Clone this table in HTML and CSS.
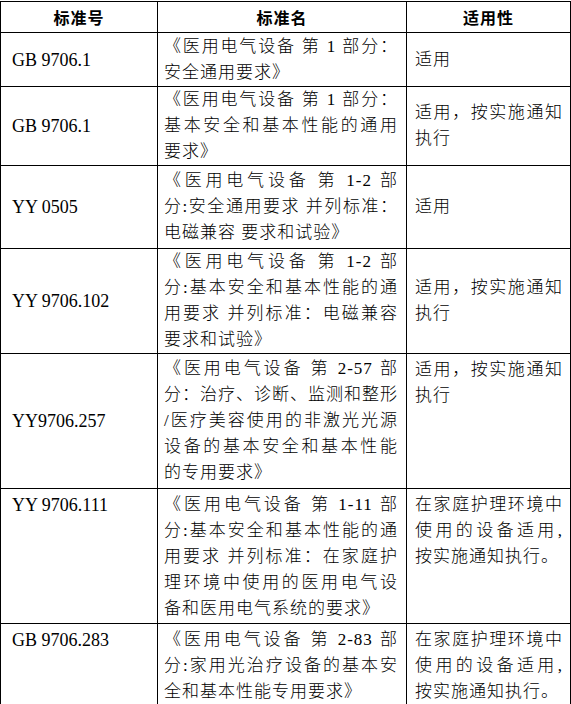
FILE: index.html
```html
<!DOCTYPE html>
<html lang="zh-CN">
<head>
<meta charset="utf-8">
<title>标准表</title>
<link rel="stylesheet" href="styles.css">
</head>
<body>
<table class="std">
  <colgroup>
    <col class="c1">
    <col class="c2">
    <col class="c3">
  </colgroup>
  <thead>
    <tr class="hd">
      <th>标准号</th>
      <th>标准名</th>
      <th>适用性</th>
    </tr>
  </thead>
  <tbody>
    <tr class="r1">
      <td class="code">GB 9706.1</td>
      <td class="name"><span class="ln">《医用电气设备 第 1 部分：</span><span class="ll">安全通用要求》</span></td>
      <td class="use"><span class="ll">适用</span></td>
    </tr>
    <tr class="r2">
      <td class="code">GB 9706.1</td>
      <td class="name"><span class="ln">《医用电气设备 第 1 部分：</span><span class="ln">基本安全和基本性能的通用</span><span class="ll">要求》</span></td>
      <td class="use"><span class="ln">适用，按实施通知</span><span class="ll">执行</span></td>
    </tr>
    <tr class="r3">
      <td class="code">YY 0505</td>
      <td class="name"><span class="ln">《医用电气设备 第 1-2 部</span><span class="ln">分:安全通用要求 并列标准：</span><span class="ll">电磁兼容 要求和试验》</span></td>
      <td class="use"><span class="ll">适用</span></td>
    </tr>
    <tr class="r4">
      <td class="code">YY 9706.102</td>
      <td class="name"><span class="ln">《医用电气设备 第 1-2 部</span><span class="ln">分:基本安全和基本性能的通</span><span class="ln">用要求 并列标准：电磁兼容</span><span class="ll">要求和试验》</span></td>
      <td class="use"><span class="ln">适用，按实施通知</span><span class="ll">执行</span></td>
    </tr>
    <tr class="r5">
      <td class="code">YY9706.257</td>
      <td class="name"><span class="ln">《医用电气设备 第 2-57 部</span><span class="ln">分：治疗、诊断、监测和整形</span><span class="ln">/医疗美容使用的非激光光源</span><span class="ln">设备的基本安全和基本性能</span><span class="ll">的专用要求》</span></td>
      <td class="use top"><span class="ln">适用，按实施通知</span><span class="ll">执行</span></td>
    </tr>
    <tr class="r6">
      <td class="code top">YY 9706.111</td>
      <td class="name top"><span class="ln">《医用电气设备 第 1-11 部</span><span class="ln">分:基本安全和基本性能的通</span><span class="ln">用要求 并列标准：在家庭护</span><span class="ln">理环境中使用的医用电气设</span><span class="ll">备和医用电气系统的要求》</span></td>
      <td class="use top"><span class="ln">在家庭护理环境中</span><span class="ln">使用的设备适用,</span><span class="ll">按实施通知执行。</span></td>
    </tr>
    <tr class="r7">
      <td class="code top">GB 9706.283</td>
      <td class="name top"><span class="ln">《医用电气设备 第 2-83 部</span><span class="ln">分:家用光治疗设备的基本安</span><span class="ll">全和基本性能专用要求》</span></td>
      <td class="use top"><span class="ln">在家庭护理环境中</span><span class="ln">使用的设备适用,</span><span class="ll">按实施通知执行。</span></td>
    </tr>
  </tbody>
</table>
</body>
</html>
```
FILE: styles.css
```css
html, body {
  margin: 0;
  padding: 0;
  background: #ffffff;
}

body {
  padding: 1px 0 0 0;
  font-family: "Liberation Serif", "Noto Sans CJK SC", serif;
  font-size: 18px;
  color: #000000;
}

.std {
  border-collapse: collapse;
  table-layout: fixed;
  width: 570px;
}

.c1 { width: 157px; }
.c2 { width: 249px; }
.c3 { width: 164px; }

.std th,
.std td {
  border: 1px solid #000000;
  vertical-align: middle;
  line-height: 26px;
  padding: 0;
}

.std th {
  font-family: "Noto Sans CJK SC", sans-serif;
  font-weight: bold;
  font-size: 16px;
  letter-spacing: 1px;
  text-align: center;
}

.hd { height: 31px; }
.r1 { height: 54px; }
.r2 { height: 79px; }
.r3 { height: 83px; }
.r4 { height: 104px; }
.r5 { height: 135px; }
.r6 { height: 135px; }
.r7 { height: 80px; }

.code {
  padding-left: 11px !important;
  white-space: nowrap;
}

.name,
.use {
  font-size: 17px;
  letter-spacing: 1px;
  font-weight: 300;
}

.name {
  padding-left: 6px !important;
  padding-right: 8px !important;
}

.use {
  padding-left: 8px !important;
  padding-right: 7px !important;
}

.ln,
.ll {
  display: block;
  white-space: nowrap;
}

.ln {
  text-align: justify;
  text-align-last: justify;
}

.ll {
  text-align: left;
}

.std td.top {
  vertical-align: top;
  padding-top: 3px;
}
```
